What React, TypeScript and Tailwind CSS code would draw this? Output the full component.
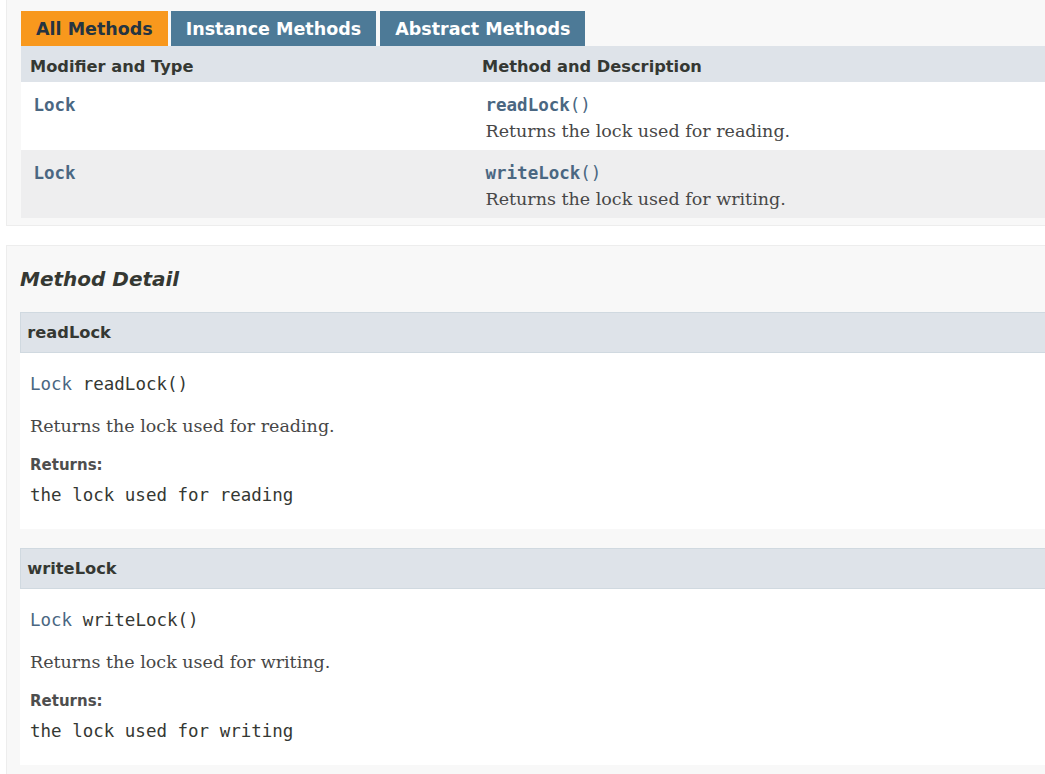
import React from 'react';

type Method = {
  name: string;
  summary: string;
  returns: string;
};

const methods: Method[] = [
  { name: 'readLock', summary: 'Returns the lock used for reading.', returns: 'the lock used for reading' },
  { name: 'writeLock', summary: 'Returns the lock used for writing.', returns: 'the lock used for writing' },
];

const sans = "font-['DejaVu_Sans',Arial,sans-serif]";
const mono = "font-['DejaVu_Sans_Mono',monospace]";
const serif = "font-['DejaVu_Serif',Georgia,serif]";

const Tabs = () => (
  <div className={`flex h-[35px] text-[17.5px] font-bold leading-[33.5px] ${sans}`}>
    <span className="bg-[#f8981d] px-[15px] pt-[1.5px] text-[#253441]">All Methods</span>
    <span className="ml-[3px] bg-[#4d7a97] px-[15px] pt-[1.5px] text-white">Instance Methods</span>
    <span className="ml-[4px] bg-[#4d7a97] px-[15px] pt-[1.5px] text-white">Abstract Methods</span>
  </div>
);

const SummaryTable = () => (
  <div className="grid grid-cols-[452px_1fr]">
    <div className={`bg-[#dee3e9] pt-[9.5px] pb-[4.5px] pl-[9px] text-[16.25px] font-bold leading-[22px] text-[#353833] ${sans}`}>
      Modifier and Type
    </div>
    <div className={`bg-[#dee3e9] pt-[9.5px] pb-[4.5px] pl-[9px] text-[16.25px] font-bold leading-[22px] text-[#353833] ${sans}`}>
      Method and Description
    </div>
    {methods.map((m, i) => {
      const bg = i % 2 === 0 ? 'bg-white' : 'bg-[#eeeeef]';
      return (
        <React.Fragment key={m.name}>
          <div className={`${bg} h-[68px] pt-[11px] pl-[12.5px]`}>
            <span className={`text-[17.5px] font-bold leading-[24.5px] text-[#4a6782] ${mono}`}>Lock</span>
          </div>
          <div className={`${bg} h-[68px] pt-[11px] pl-[12.5px]`}>
            <div className={`text-[17.5px] leading-[24.5px] text-[#4a6782] ${mono}`}>
              <span className="font-bold">{m.name}</span>()
            </div>
            <div className={`text-[17.5px] leading-[27px] text-[#474747] ${serif}`}>{m.summary}</div>
          </div>
        </React.Fragment>
      );
    })}
  </div>
);

const MethodDetail = ({ m, last }: { m: Method; last: boolean }) => (
  <div className={last ? '' : 'mb-[19px]'}>
    <div
      className={`h-[41px] border border-[#d0d9e0] bg-[#dee3e9] px-[6.25px] pt-[8.75px] text-[16.25px] font-bold leading-[21.5px] text-[#353833] ${sans}`}
    >
      {m.name}
    </div>
    <div className="bg-white pt-[19px] pb-[21.1px] pl-[10px]">
      <div className={`text-[17.5px] leading-[24.5px] text-[#353833] ${mono}`}>
        <span className="text-[#4a6782]">Lock</span> {m.name}()
      </div>
      <div className={`mt-[17.3px] text-[17.5px] leading-[24px] text-[#474747] ${serif}`}>{m.summary}</div>
      <div className={`mt-[17.1px] text-[15px] font-bold leading-[20px] text-[#4e4e4e] ${sans}`}>Returns:</div>
      <div className={`mt-[8.5px] text-[17.5px] leading-[24.5px] text-[#353833] ${mono}`}>{m.returns}</div>
    </div>
  </div>
);

export default function App() {
  return (
    <div className={`h-[774px] w-[1045px] overflow-hidden bg-white text-[#353833] ${sans}`}>
      <div className="w-[1100px] pl-[6px]">
        <div className="border-x border-b border-[#ededed] bg-[#f8f8f8] pt-[11px] pb-[7px] pl-[14px]">
          <Tabs />
          <SummaryTable />
        </div>

        <div className="mt-[19px] border border-[#ededed] bg-[#f8f8f8] pt-[21px] pb-[10px] pl-[13px]">
          <h3 className="text-[20px] font-bold italic leading-[24px] text-[#353833]">Method Detail</h3>
          <div className="mt-[21px]">
            {methods.map((m, i) => (
              <MethodDetail key={m.name} m={m} last={i === methods.length - 1} />
            ))}
          </div>
        </div>
      </div>
    </div>
  );
}
